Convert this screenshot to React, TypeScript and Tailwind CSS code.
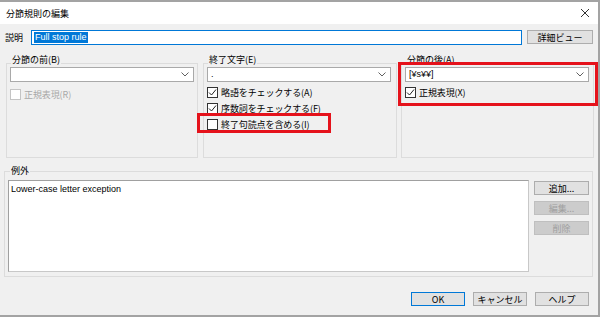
import React from 'react'

const jp = { fontFamily: '"Noto Sans CJK JP", "Noto Sans", sans-serif' }
const lat = { fontFamily: '"Liberation Sans", "Noto Sans CJK JP", sans-serif' }

function Check({ checked, disabled }: { checked?: boolean; disabled?: boolean }) {
  return (
    <div className={`w-[11px] h-[11px] bg-white border flex items-center justify-center shrink-0 ${disabled ? 'border-[#c4c4c4]' : 'border-[#333333]'}`}>
      {checked && (
        <svg width="9" height="9" viewBox="0 0 9 9">
          <path d="M1 4.5 L3.5 7 L8 1.5" fill="none" stroke="#222" strokeWidth="1" />
        </svg>
      )}
    </div>
  )
}

function Combo({ value, w }: { value?: string; w: string }) {
  return (
    <div className={`${w} h-[15px] bg-white border border-[#a9a9a9] flex items-center justify-between pl-[3px] pr-[4px]`}>
      <span className="text-[9px] leading-none text-black" style={lat}>{value}</span>
      <svg width="8" height="5" viewBox="0 0 8 5">
        <path d="M0.5 0.5 L4 4 L7.5 0.5" fill="none" stroke="#606060" strokeWidth="1" />
      </svg>
    </div>
  )
}

function CheckRow({ label, checked, disabled }: { label: string; checked?: boolean; disabled?: boolean }) {
  return (
    <div className="flex items-center gap-[3px] h-[16px]">
      <Check checked={checked} disabled={disabled} />
      <span className={`text-[9px] leading-none tracking-[-0.1px] ${disabled ? 'text-[#a8a8a8]' : 'text-black'}`} style={jp}>{label}</span>
    </div>
  )
}

function Group({ title, w, children }: { title: string; w: string; children: React.ReactNode }) {
  return (
    <div className={`relative ${w} h-[95px] border border-[#dcdcdc] px-[3px] pt-[3px]`}>
      <span className="absolute -top-[9px] left-[4px] bg-[#f0f0f0] px-[1px] text-[9px] leading-none text-black" style={jp}>{title}</span>
      {children}
    </div>
  )
}

function Btn({ label, w, disabled, focused }: { label: string; w: string; disabled?: boolean; focused?: boolean }) {
  const cls = disabled
    ? 'bg-[#cccccc] border-[#bfbfbf] text-[#a0a0a0]'
    : focused
    ? 'bg-[#e1e1e1] border-[#0078d7] text-black'
    : 'bg-[#e1e1e1] border-[#adadad] text-black'
  return (
    <div className={`${w} h-[14px] border flex items-center justify-center text-[9px] leading-none ${cls}`} style={jp}>
      {label}
    </div>
  )
}

export default function App() {
  return (
    <div className="relative w-[600px] h-[317px] bg-[#a3a3a3] overflow-hidden" style={jp}>
      <div className="h-[2px]" />
      <div className="w-[598px] h-[313px] flex flex-col">
        {/* title bar */}
        <div className="h-[22px] bg-white flex items-center justify-between pl-[6px] pr-[8px]">
          <span className="text-[9px] leading-none text-black">分節規則の編集</span>
          <svg width="10" height="10" viewBox="0 0 10 10">
            <path d="M1 1 L9 9 M9 1 L1 9" stroke="#333" strokeWidth="1" />
          </svg>
        </div>

        <div className="flex-1 bg-[#f0f0f0] flex flex-col">
          {/* description row */}
          <div className="mt-[5px] h-[16px] flex items-center pl-[5px]">
            <span className="w-[26px] text-[9px] leading-none text-black">説明</span>
            <div className="w-[491px] h-[15px] bg-white border border-[#0078d7] flex items-center pl-[2px]">
              <span className="bg-[#0078d7] text-white text-[9px] leading-[11px] px-[1px]" style={lat}>Full stop rule</span>
            </div>
            <div className="ml-[5px]">
              <Btn label="詳細ビュー" w="w-[66px]" />
            </div>
          </div>

          {/* three groups */}
          <div className="mt-[18px] pl-[6px] flex">
            <Group title="分節の前(B)" w="w-[192px]">
              <Combo w="w-[184px]" />
              <div className="mt-[4px]">
                <CheckRow label="正規表現(R)" disabled />
              </div>
            </Group>
            <div className="ml-[5px]">
              <Group title="終了文字(E)" w="w-[194px]">
                <Combo w="w-[184px]" value="." />
                <div className="mt-[2px] flex flex-col">
                  <CheckRow label="略語をチェックする(A)" checked />
                  <CheckRow label="序数詞をチェックする(F)" checked />
                  <CheckRow label="終了句読点を含める(I)" />
                </div>
              </Group>
            </div>
            <div className="ml-[4px]">
              <Group title="分節の後(A)" w="w-[193px]">
                <Combo w="w-[184px]" value="[¥s¥¥]" />
                <div className="mt-[2px]">
                  <CheckRow label="正規表現(X)" checked />
                </div>
              </Group>
            </div>
          </div>

          {/* exceptions */}
          <div className="relative mt-[13px] ml-[4px] w-[589px] h-[106px] border border-[#dcdcdc] flex pl-[3px] pt-[8px]">
            <span className="absolute -top-[6px] left-[5px] bg-[#f0f0f0] px-[1px] text-[9px] leading-none text-black">例外</span>
            <div className="w-[521px] h-[92px] bg-white border border-[#a0a0a0] border-r-[#c8c8c8] border-b-[#c8c8c8] pl-[2px] pt-[3px] text-[9px] leading-[11px] text-black" style={lat}>
              Lower-case letter exception
            </div>
            <div className="ml-[5px] flex flex-col gap-[6px] pt-[1px]">
              <Btn label="追加..." w="w-[55px]" />
              <Btn label="編集..." w="w-[55px]" disabled />
              <Btn label="削除" w="w-[55px]" disabled />
            </div>
          </div>

          {/* bottom buttons */}
          <div className="mt-[15px] flex justify-end pr-[9px] gap-[8px]">
            <Btn label="OK" w="w-[54px]" focused />
            <Btn label="キャンセル" w="w-[54px]" />
            <Btn label="ヘルプ" w="w-[54px]" />
          </div>
        </div>
      </div>

      {/* red highlight annotations */}
      <div className="absolute left-[197px] top-[113px] w-[134px] h-[20px] border-[3px] border-[#e5121b]" />
      <div className="absolute left-[398px] top-[62px] w-[200px] h-[44px] border-[3px] border-[#e5121b]" />
    </div>
  )
}
